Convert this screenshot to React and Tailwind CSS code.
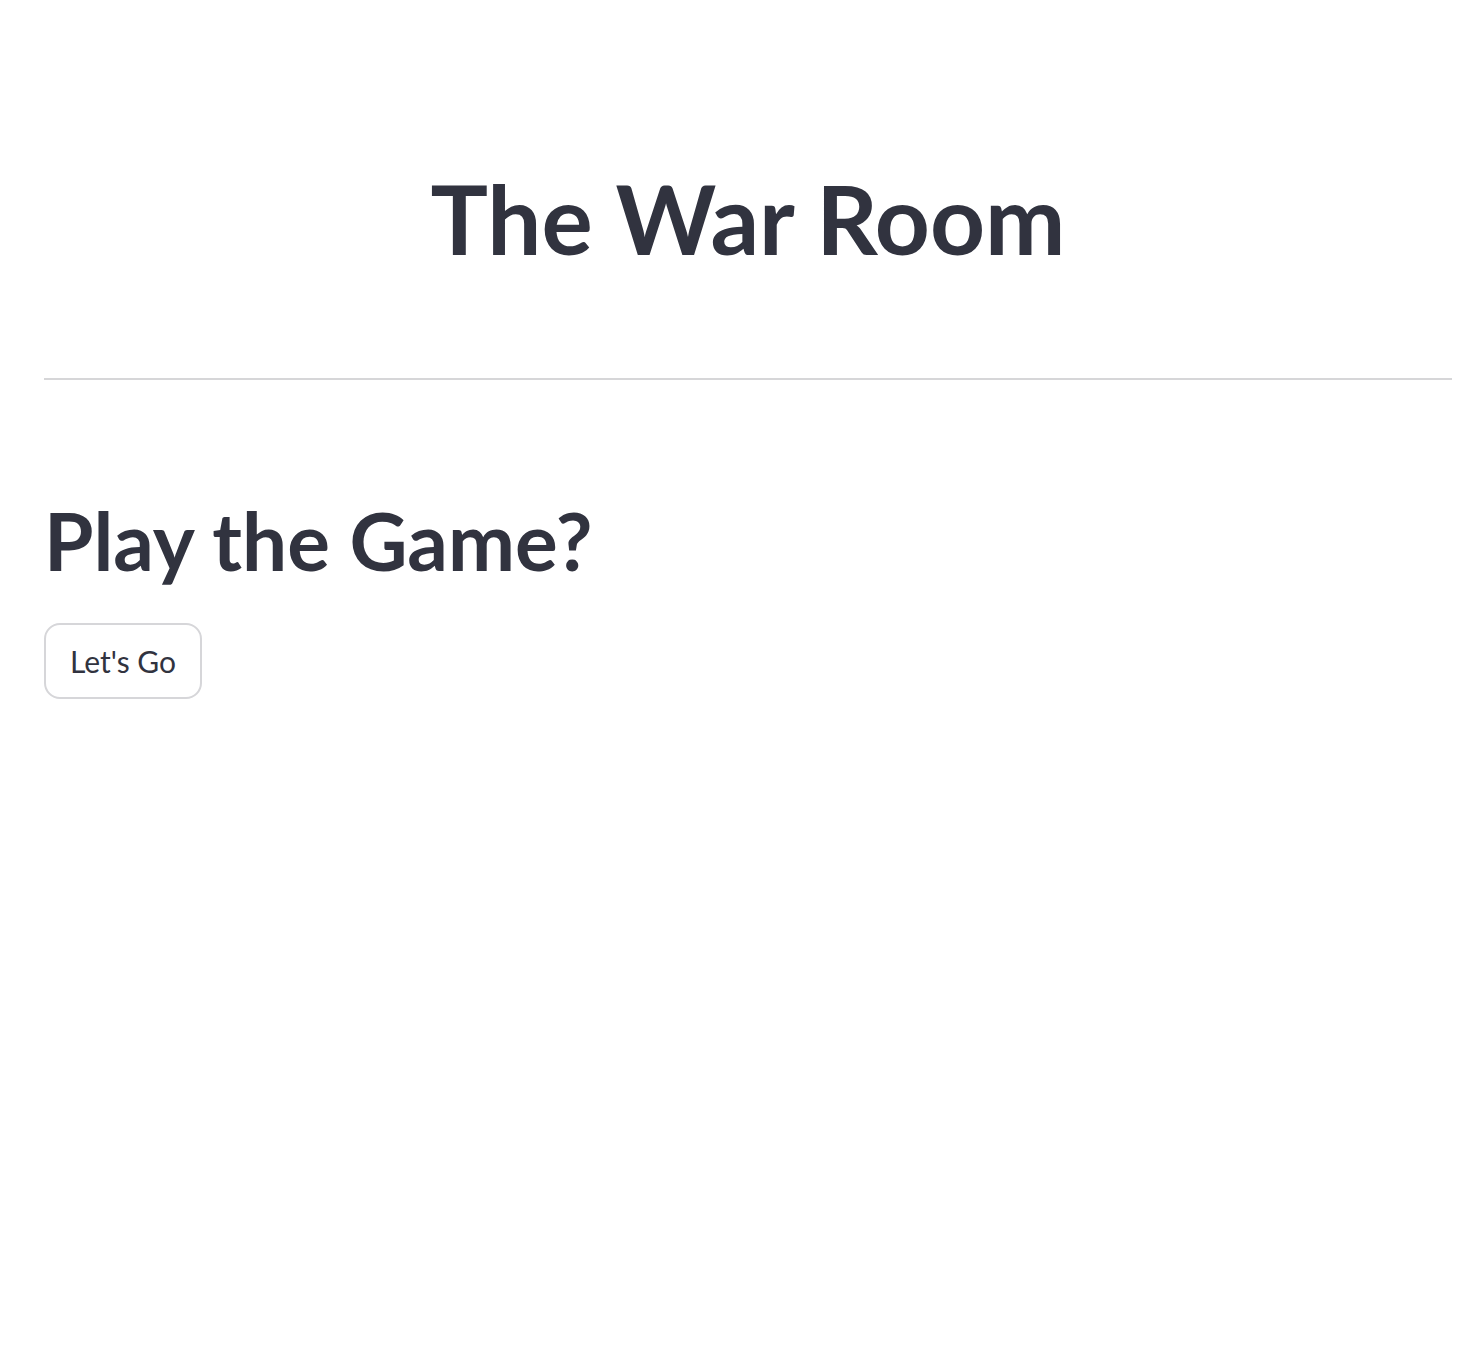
import React from 'react';

export default function App() {
    return (
        <div className="min-h-screen bg-white text-[#31333f] font-['Lato','Noto_Sans',sans-serif]">
            <div className="pl-[44px] pr-[14px] pt-[160px]">
                <h1 className="text-center text-[96px] font-bold leading-[1.2]">The War Room</h1>
                <hr className="mt-[103px] border-0 border-t-2 border-[#d6d6d8]" />
                <h2 className="mt-[112px] text-[80px] font-bold leading-[1.2]">Play the Game?</h2>
                <button className="mt-[35px] h-[76px] px-[24px] rounded-[16px] border-2 border-[#d6d6d9] bg-white text-[30px] leading-none">
                    Let's Go
                </button>
            </div>
        </div>
    );
}
